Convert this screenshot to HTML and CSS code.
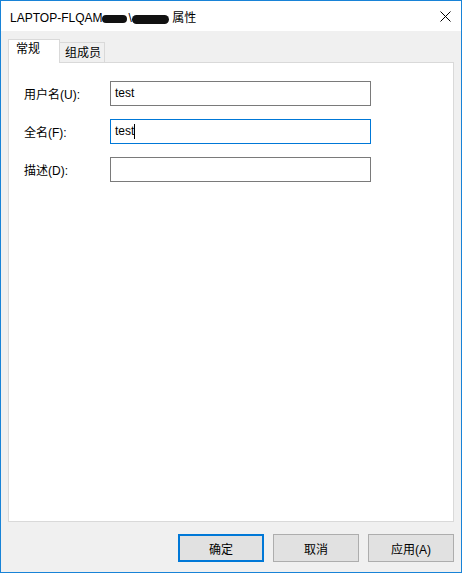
FILE: index.html
```html
<!DOCTYPE html>
<html lang="zh-CN">
  <head>
    <meta charset="utf-8" />
    <title>属性</title>
    <link rel="stylesheet" href="styles.css">
  </head>
  <body>
    <div class="window">
      <div class="titlebar">
        <span class="title">LAPTOP-FLQAM<span class="blot blot-a"></span>\<span class="blot blot-b"></span> 属性</span>
        <span class="close-btn">
          <svg width="11" height="11" viewBox="0 0 11 11">
            <path d="M0.5 0.5 L10.5 10.5 M10.5 0.5 L0.5 10.5" stroke="#000" stroke-width="1" fill="none" />
          </svg>
        </span>
      </div>

      <div class="tabs">
        <div class="tab tab-active">常规</div>
        <div class="tab">组成员</div>
      </div>

      <div class="panel">
        <div class="form-row">
          <span class="field-label">用户名(U):</span>
          <div class="field">test</div>
        </div>
        <div class="form-row">
          <span class="field-label">全名(F):</span>
          <div class="field field-focus">test<span class="caret"></span></div>
        </div>
        <div class="form-row">
          <span class="field-label">描述(D):</span>
          <div class="field"></div>
        </div>
      </div>

      <div class="footer">
        <button class="btn btn-default">确定</button>
        <button class="btn">取消</button>
        <button class="btn">应用(A)</button>
      </div>
    </div>
  </body>
</html>
```

FILE: styles.css
```css
body {
  margin: 0;
  font-family: "Liberation Sans", "Noto Sans CJK SC", sans-serif;
  font-size: 12px;
  color: #000;
}

/* window frame */
.window {
  width: 462px;
  height: 573px;
  box-sizing: border-box;
  border: 1px solid #1883d7;
  background-color: #f0f0f0;
  display: flex;
  flex-direction: column;
}

/* title bar */
.titlebar {
  height: 30px;
  flex-shrink: 0;
  background-color: #fff;
  display: flex;
  align-items: center;
  justify-content: space-between;
  padding: 0 10px 0 9px;
}
.title {
  white-space: nowrap;
  margin-top: 1px;
}
.blot {
  display: inline-block;
  background-color: #111;
  border-radius: 5px;
  vertical-align: middle;
}
.blot-a {
  width: 25px;
  height: 8px;
  margin-right: 1px;
}
.blot-b {
  width: 37px;
  height: 9px;
  margin-top: 2px;
}
.close-btn {
  display: flex;
  width: 11px;
  height: 11px;
}

/* tabs */
.tabs {
  display: flex;
  align-items: flex-end;
  padding: 8px 7px 0;
  height: 23px;
  flex-shrink: 0;
}
.tab {
  box-sizing: border-box;
  height: 20px;
  padding: 0 3px 0 5px;
  border: 1px solid #d9d9d9;
  border-left: none;
  border-bottom: none;
  background-color: #f0f0f0;
  line-height: 20px;
}
.tab-active {
  position: relative;
  z-index: 1;
  height: 24px;
  width: 52px;
  margin-bottom: -1px;
  padding-left: 7px;
  border-left: 1px solid #d9d9d9;
  background-color: #fff;
  line-height: 19px;
}

/* property page */
.panel {
  flex: 1;
  margin: 0 7px;
  border: 1px solid #d9d9d9;
  background-color: #fff;
  padding: 18px 15px 0;
  display: flex;
  flex-direction: column;
  gap: 13px;
}
.form-row {
  display: flex;
  align-items: center;
}
.field-label {
  width: 86px;
  flex-shrink: 0;
}
.field {
  box-sizing: border-box;
  width: 261px;
  height: 25px;
  border: 1px solid #7a7a7a;
  padding: 0 4px;
  line-height: 23px;
  display: flex;
  align-items: center;
}
.field-focus {
  border-color: #0078d7;
}
.caret {
  display: inline-block;
  width: 1px;
  height: 15px;
  background-color: #000;
}

/* bottom buttons */
.footer {
  flex-shrink: 0;
  display: flex;
  justify-content: flex-end;
  gap: 9px;
  padding: 12px 7px 10px;
}
.btn {
  box-sizing: border-box;
  width: 86px;
  height: 28px;
  border: 1px solid #adadad;
  background-color: #e1e1e1;
  font-family: "Liberation Sans", "Noto Sans CJK SC", sans-serif;
  font-size: 12px;
  color: #000;
  padding: 0;
}
.btn-default {
  border: 2px solid #0078d7;
}
```
